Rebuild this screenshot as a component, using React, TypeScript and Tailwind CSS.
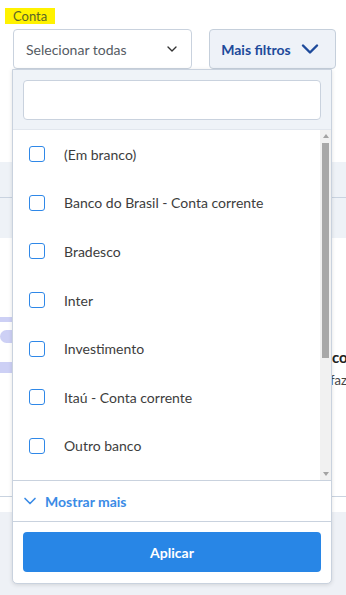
import { useState } from 'react';

const contas = [
    '(Em branco)',
    'Banco do Brasil - Conta corrente',
    'Bradesco',
    'Inter',
    'Investimento',
    'Itaú - Conta corrente',
    'Outro banco',
];

const Chevron = ({ className, width = 2 }: { className: string; width?: number }) => (
    <svg viewBox="0 0 24 24" fill="none" stroke="currentColor" strokeWidth={width} strokeLinecap="round" strokeLinejoin="round" className={className}>
        <path d="M6 9l6 6 6-6" />
    </svg>
);

export default function App() {
    const [checked, setChecked] = useState<Record<string, boolean>>({});
    const [busca, setBusca] = useState('');

    return (
        <div className="relative w-[346px] h-[595px] overflow-hidden bg-white font-['Lato','Liberation_Sans',sans-serif]">
            {/* filtros */}
            <div className="pt-[8px] pl-[5px]">
                <div className="bg-[#fff200] h-[16px] w-[50px] pl-[8px] text-[13px] leading-[16px] text-[#5a6628]">Conta</div>
            </div>
            <div className="flex gap-[17px] pl-[13px] mt-[5px]">
                <button className="w-[179px] h-[40px] border border-[#c9d2de] rounded-[4px] bg-white flex items-center justify-between pl-[12px] pr-[11px] text-[14px] text-[#555b63]">
                    <span>Selecionar todas</span>
                    <Chevron className="w-[16px] h-[16px] text-[#333]" width={2} />
                </button>
                <button className="w-[127px] h-[40px] border border-[#c5cfdb] rounded-[4px] bg-[#eef2f8] flex items-center justify-center gap-[5px] text-[14px] font-bold text-[#1d4a9b]">
                    <span>Mais filtros</span>
                    <Chevron className="w-[28px] h-[28px] text-[#1d4a9b]" width={2.1} />
                </button>
            </div>

            {/* conteúdo da página atrás do dropdown */}
            <div className="mt-[93px] h-[76px] bg-[#eef2f7] flex flex-col">
                <div className="h-[36px] border-b border-[#c9d3e0]" />
            </div>
            <div className="mt-[79px] h-[5px] w-[30px] bg-[#cdd0f5]" />
            <div className="mt-[8px] h-[13px] w-[28px] rounded-full bg-[#cdd0f5]" />
            <div className="mt-[19px] h-[11px] w-[30px] bg-[#cdd0f5]" />
            <div className="absolute left-[332px] top-[347px] text-[15px] font-bold text-[#222] leading-[20px]">co</div>
            <div className="absolute left-[330px] top-[372px] text-[13px] text-[#444] leading-[16px]">faz</div>
            <div className="mt-[123px] h-[16px] border-t border-[#c9d3e0]" />
            <div className="h-[120px] bg-[#eef1f6]" />

            {/* dropdown */}
            <div className="absolute left-[12px] top-[69px] w-[320px] h-[515px] border border-[#c9d2de] rounded-b-[5px] bg-white shadow-[0_1px_4px_rgba(0,0,0,0.12)] flex flex-col overflow-hidden">
                <div className="h-[60px] bg-[#eff3f8] px-[10px] pt-[10px] border-b border-[#e2e7ee]">
                    <input
                        value={busca}
                        onChange={(e) => setBusca(e.target.value)}
                        className="w-full h-[40px] bg-white border border-[#c9d2de] rounded-[4px] outline-none px-[10px] text-[14px]"
                    />
                </div>
                <div className="flex h-[351px] border-b border-[#c9d2de]">
                    <div className="flex-1 overflow-hidden">
                        {contas.map((c) => (
                            <label key={c} className="flex items-center h-[48.6px] pl-[16px] cursor-pointer">
                                <input
                                    type="checkbox"
                                    checked={!!checked[c]}
                                    onChange={() => setChecked({ ...checked, [c]: !checked[c] })}
                                    className="appearance-none w-[16px] h-[16px] border-[1.5px] border-[#2f88e8] rounded-[3px] bg-white checked:bg-[#2f88e8]"
                                />
                                <span className="ml-[19px] text-[14px] text-[#3d3d3d]">{c}</span>
                            </label>
                        ))}
                    </div>
                    <div className="w-[11px] bg-[#f1f1f1] flex flex-col items-center">
                        <svg viewBox="0 0 8 8" className="w-[8px] h-[12px] fill-[#a3a3a3]"><path d="M1 6h6L4 2z" /></svg>
                        <div className="w-[7px] h-[215px] bg-[#a8a8a8] mt-[1px]" />
                        <div className="flex-1" />
                        <svg viewBox="0 0 8 8" className="w-[8px] h-[12px] fill-[#a3a3a3]"><path d="M1 2h6L4 6z" /></svg>
                    </div>
                </div>
                <button className="h-[41px] border-b border-[#c9d2de] flex items-center pl-[7px] gap-[5px] text-[14px] font-bold text-[#3b8be6]">
                    <Chevron className="w-[20px] h-[20px]" width={2} />
                    <span>Mostrar mais</span>
                </button>
                <div className="p-[10px]">
                    <button className="w-full h-[40px] rounded-[4px] bg-[#2886e6] text-white text-[14px] font-bold">Aplicar</button>
                </div>
            </div>
        </div>
    );
}
